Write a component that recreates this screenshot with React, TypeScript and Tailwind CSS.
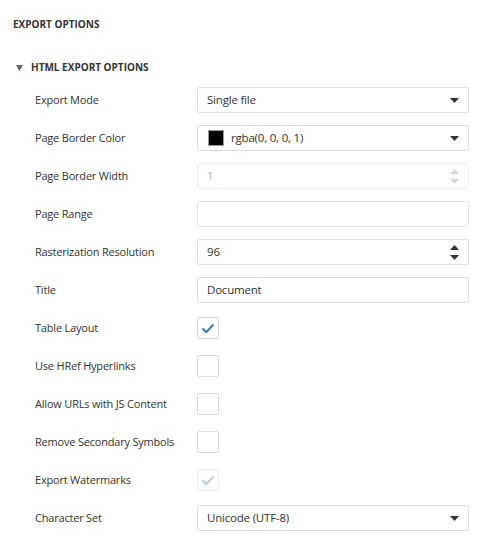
import type { ReactNode } from 'react'

function Caret() {
  return (
    <svg width="9" height="5" viewBox="0 0 9 5" className="shrink-0">
      <path d="M0 0h9L4.5 5z" fill="#333" />
    </svg>
  )
}

function Spinner({ disabled }: { disabled?: boolean }) {
  const c = disabled ? '#d6d6d6' : '#333'
  return (
    <div className="flex flex-col items-center gap-[5px]">
      <svg width="9" height="5" viewBox="0 0 9 5">
        <path d="M0 5h9L4.5 0z" fill={c} />
      </svg>
      <svg width="9" height="5" viewBox="0 0 9 5">
        <path d="M0 0h9L4.5 5z" fill={c} />
      </svg>
    </div>
  )
}

function Check({ color }: { color: string }) {
  return (
    <svg width="14" height="11" viewBox="0 0 14 11">
      <path d="M1.5 5.5l3.8 3.6L12.5 1.5" fill="none" stroke={color} strokeWidth="2" />
    </svg>
  )
}

function Box({ children, className = '' }: { children?: ReactNode; className?: string }) {
  return (
    <div
      className={`flex h-[26px] w-[272px] items-center rounded-[3px] border px-[9px] text-[11.5px] tracking-[-0.2px] ${className}`}
    >
      {children}
    </div>
  )
}

function Checkbox({ checked, disabled }: { checked?: boolean; disabled?: boolean }) {
  return (
    <div
      className={`flex h-[22px] w-[22px] items-center justify-center rounded-[2px] border ${
        disabled ? 'border-[#ececec]' : 'border-[#d9d9d9]'
      }`}
    >
      {checked && <Check color={disabled ? '#b4cfe9' : '#337ab7'} />}
    </div>
  )
}

function Row({ label, children }: { label: string; children: ReactNode }) {
  return (
    <div className="flex h-[38px] items-center">
      <div className="w-[197px] shrink-0 whitespace-nowrap pl-[35px] text-[11px] tracking-[-0.2px] text-[#333]">
        {label}
      </div>
      {children}
    </div>
  )
}

export default function App() {
  return (
    <div
      className="min-h-screen bg-white pt-[17px] text-[#333]"
      style={{ fontFamily: '"Open Sans", "Noto Sans", sans-serif' }}
    >
      <div className="pl-[13px] text-[10px] font-bold text-[#333]">EXPORT OPTIONS</div>
      <div className="mt-[28px] flex items-center pl-[16px]">
        <svg width="7" height="6" viewBox="0 0 7 6">
          <path d="M0 0h7L3.5 6z" fill="#666" />
        </svg>
        <span className="ml-[8px] text-[10px] font-bold text-[#333]">HTML EXPORT OPTIONS</span>
      </div>
      <div className="mt-[6px]">
        <Row label="Export Mode">
          <Box className="justify-between border-[#dcdcdc]">
            <span>Single file</span>
            <Caret />
          </Box>
        </Row>
        <Row label="Page Border Color">
          <Box className="justify-between border-[#dcdcdc] pl-[4px]">
            <div className="flex items-center">
              <span className="ml-[6px] h-[16px] w-[16px] border border-[#999] bg-black" />
              <span className="ml-[7px]">rgba(0, 0, 0, 1)</span>
            </div>
            <Caret />
          </Box>
        </Row>
        <Row label="Page Border Width">
          <Box className="justify-between border-[#eeeeee] text-[#b0b0b0]">
            <span>1</span>
            <Spinner disabled />
          </Box>
        </Row>
        <Row label="Page Range">
          <Box className="border-[#e3e3e3]" />
        </Row>
        <Row label="Rasterization Resolution">
          <Box className="justify-between border-[#dcdcdc]">
            <span>96</span>
            <Spinner />
          </Box>
        </Row>
        <Row label="Title">
          <Box className="border-[#dcdcdc]">
            <span>Document</span>
          </Box>
        </Row>
        <Row label="Table Layout">
          <Checkbox checked />
        </Row>
        <Row label="Use HRef Hyperlinks">
          <Checkbox />
        </Row>
        <Row label="Allow URLs with JS Content">
          <Checkbox />
        </Row>
        <Row label="Remove Secondary Symbols">
          <Checkbox />
        </Row>
        <Row label="Export Watermarks">
          <Checkbox checked disabled />
        </Row>
        <Row label="Character Set">
          <Box className="justify-between border-[#dcdcdc]">
            <span>Unicode (UTF-8)</span>
            <Caret />
          </Box>
        </Row>
      </div>
    </div>
  )
}
